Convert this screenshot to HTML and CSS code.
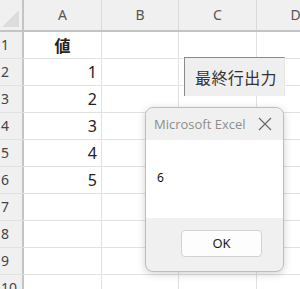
FILE: index.html
```html
<!DOCTYPE html>
<html>
<head>
<meta charset="utf-8">
<link rel="stylesheet" href="styles.css">
</head>
<body>
<div class="sheet">
  <div class="row head">
    <div class="rh corner"><span class="tri"></span></div>
    <div class="c a">A</div><div class="c b">B</div><div class="c cc">C</div><div class="c d">D</div>
  </div>
  <div class="row"><div class="rh">1</div><div class="c a ctr bold">値</div><div class="c b"></div><div class="c cc"></div><div class="c d"></div></div>
  <div class="row"><div class="rh">2</div><div class="c a num">1</div><div class="c b"></div><div class="c cc"></div><div class="c d"></div></div>
  <div class="row"><div class="rh">3</div><div class="c a num">2</div><div class="c b"></div><div class="c cc"></div><div class="c d"></div></div>
  <div class="row"><div class="rh">4</div><div class="c a num">3</div><div class="c b"></div><div class="c cc"></div><div class="c d"></div></div>
  <div class="row"><div class="rh">5</div><div class="c a num">4</div><div class="c b"></div><div class="c cc"></div><div class="c d"></div></div>
  <div class="row"><div class="rh">6</div><div class="c a num">5</div><div class="c b"></div><div class="c cc"></div><div class="c d"></div></div>
  <div class="row"><div class="rh">7</div><div class="c a"></div><div class="c b"></div><div class="c cc"></div><div class="c d"></div></div>
  <div class="row"><div class="rh">8</div><div class="c a"></div><div class="c b"></div><div class="c cc"></div><div class="c d"></div></div>
  <div class="row"><div class="rh">9</div><div class="c a"></div><div class="c b"></div><div class="c cc"></div><div class="c d"></div></div>
  <div class="row"><div class="rh">10</div><div class="c a"></div><div class="c b"></div><div class="c cc"></div><div class="c d"></div></div>
</div>

<div class="btn-sheet">最終行出力</div>

<div class="dialog">
  <div class="dlg-title">
    <span class="dlg-name">Microsoft Excel</span>
    <svg class="dlg-x" width="14" height="14" viewBox="0 0 14 14"><path d="M1 1 L13 13 M13 1 L1 13" stroke="#6a6a6a" stroke-width="1.2" fill="none"/></svg>
  </div>
  <div class="dlg-body">6</div>
  <div class="dlg-foot"><div class="ok">OK</div></div>
</div>
</body>
</html>
```
FILE: styles.css
```css
html, body {
  margin: 0;
  padding: 0;
  background: #ffffff;
  overflow: hidden;
}
body {
  width: 300px;
  height: 289px;
  position: relative;
  font-family: "Noto Sans", "Noto Sans CJK JP", sans-serif;
}
.sheet {
  display: flex;
  flex-direction: column;
  width: 300px;
  height: 289px;
  overflow: hidden;
}
.row {
  display: flex;
  flex: none;
  height: 26px;
  border-bottom: 1px solid #e1e1e1;
}
.row.head {
  height: 30px;
  background: #f0f0f0;
  border-bottom: 2px solid #c4c4c4;
}
.rh {
  width: 21px;
  flex: none;
  background: #f0f0f0;
  border-right: 2px solid #c4c4c4;
  color: #444;
  font-size: 14px;
  line-height: 26px;
  padding-left: 1px;
  box-sizing: content-box;
  overflow: visible;
  white-space: nowrap;
}
.head .rh { line-height: 30px; position: relative; }
.tri {
  position: absolute;
  left: 2px;
  top: 10px;
  width: 0;
  height: 0;
  border-left: 17px solid transparent;
  border-bottom: 17px solid #dcdcdc;
}
.c {
  flex: none;
  border-right: 1px solid #e1e1e1;
  box-sizing: border-box;
  height: 100%;
  font-size: 16px;
  line-height: 26px;
  color: #222;
}
.head .c {
  text-align: center;
  color: #555;
  font-size: 14px;
  line-height: 30px;
  border-right: 1px solid #dadada;
}
.a { width: 78px; }
.b { width: 77px; }
.cc { width: 78px; }
.d { width: 78px; }
.num { text-align: right; padding-right: 4px; }
.ctr { text-align: center; }
.bold { font-weight: bold; font-family: "Noto Sans CJK JP", sans-serif; font-size: 16px; }

.btn-sheet {
  position: absolute;
  left: 184px;
  top: 57px;
  width: 101px;
  height: 39px;
  box-sizing: border-box;
  background: #efefef;
  border-top: 1px solid #8a8a8a;
  border-left: 1px solid #8a8a8a;
  border-right: 1px solid #e8e8e8;
  font-family: "Noto Sans CJK JP", sans-serif;
  font-size: 16px;
  color: #333;
  line-height: 38px;
  padding-left: 10px;
  letter-spacing: 0.4px;
  white-space: nowrap;
}

.dialog {
  position: absolute;
  left: 145px;
  top: 107px;
  width: 139px;
  height: 165px;
  border: 1px solid #bdbdbd;
  border-radius: 8px;
  box-sizing: border-box;
  background: #f0f0f0;
  overflow: hidden;
  display: flex;
  flex-direction: column;
  box-shadow: 0 2px 8px rgba(0,0,0,0.18);
}
.dlg-title {
  height: 32px;
  display: flex;
  align-items: center;
  justify-content: space-between;
  padding: 0 11px 0 8px;
  background: #f0f0f0;
  flex: none;
}
.dlg-name {
  font-family: "Open Sans", "Noto Sans", sans-serif;
  font-size: 13px;
  color: #8e8e8e;
}
.dlg-x { display: block; }
.dlg-body {
  height: 78px;
  flex: none;
  background: #ffffff;
  font-size: 12px;
  color: #111;
  padding-left: 11px;
  line-height: 76px;
  box-sizing: border-box;
}
.dlg-foot {
  flex: 1;
  display: flex;
  justify-content: flex-end;
  padding: 12px 21px 0 0;
}
.ok {
  width: 81px;
  height: 27px;
  box-sizing: border-box;
  background: #fdfdfd;
  border: 1px solid #d2d2d2;
  border-radius: 4px;
  text-align: center;
  font-size: 13px;
  line-height: 25px;
  color: #222;
}
```
